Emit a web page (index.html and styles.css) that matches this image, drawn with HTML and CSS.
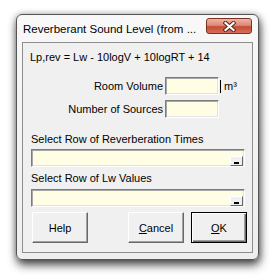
FILE: index.html
```html
<!DOCTYPE html>
<html>
<head>
<meta charset="utf-8">
<link rel="stylesheet" href="styles.css">
</head>
<body>
<div class="window">
  <div class="titlebar">
    <span class="title">Reverberant Sound Level (from ...</span>
    <div class="close">
      <svg width="13" height="11" viewBox="0 0 13 11">
        <path d="M2.5 2 L10.5 9 M10.5 2 L2.5 9" stroke="#5a2418" stroke-width="4.2" stroke-linecap="square"/>
        <path d="M2.5 2 L10.5 9 M10.5 2 L2.5 9" stroke="#ffffff" stroke-width="2.2" stroke-linecap="square"/>
      </svg>
    </div>
  </div>
  <div class="client">
    <div class="formula">Lp,rev = Lw - 10logV + 10logRT + 14</div>
    <div class="row row1">
      <span class="lbl">Room Volume</span>
      <div class="field small"></div>
      <span class="unit">m³</span>
    </div>
    <div class="row row2">
      <span class="lbl">Number of Sources</span>
      <div class="field small"></div>
    </div>
    <div class="caption cap1">Select Row of Reverberation Times</div>
    <div class="field wide"><div class="pick"><span class="dash"></span></div></div>
    <div class="caption cap2">Select Row of Lw Values</div>
    <div class="field wide wide2"><div class="pick"><span class="dash"></span></div></div>
    <div class="buttons">
      <div class="btn help">Help</div>
      <div class="btn cancel"><u>C</u>ancel</div>
      <div class="btn ok"><u>O</u>K</div>
    </div>
  </div>
</div>
</body>
</html>
```
FILE: styles.css
```css
html, body {
  margin: 0;
  padding: 0;
  background: #ffffff;
}
body {
  width: 280px;
  height: 277px;
  overflow: hidden;
  font-family: "Liberation Sans", Arial, sans-serif;
  font-size: 11px;
  color: #000;
}
.window {
  margin: 14px 0 0 16px;
  width: 243px;
  height: 246px;
  box-sizing: border-box;
  border: 1px solid #555555;
  border-radius: 6px;
  background: linear-gradient(#f8f8f8, #eeeeee);
  box-shadow: 1px 5px 10px rgba(0,0,0,0.7), 0 0 6px rgba(0,0,0,0.25);
  padding: 0 5px 6px 5px;
  display: flex;
  flex-direction: column;
}
.titlebar {
  height: 27px;
  display: flex;
  align-items: center;
  justify-content: space-between;
  padding-left: 1px;
}
.title {
  font-family: "Liberation Sans", Arial, sans-serif;
  font-size: 11.5px;
  color: #000;
  white-space: nowrap;
  margin-top: 1px;
}
.close {
  align-self: flex-start;
  margin-top: 3px;
  margin-right: 1px;
  width: 44px;
  height: 14px;
  border: 1px solid #7c3022;
  border-radius: 3px;
  background: linear-gradient(#ecb4a6 0%, #dc8a75 45%, #c64a34 55%, #d66f59 100%);
  display: flex;
  align-items: center;
  justify-content: center;
}
.client {
  flex: 1;
  border: 1px solid #8e8e8e;
  background: #f0f0f0;
  display: flex;
  flex-direction: column;
}
.formula {
  margin-top: 7px;
  padding-left: 7px;
  line-height: 14px;
  height: 14px;
}
.row {
  display: flex;
  align-items: center;
  height: 18px;
}
.row1 { margin-top: 13px; }
.row2 { margin-top: 5px; }
.lbl {
  width: 142px;
  text-align: right;
  padding-right: 2px;
  box-sizing: border-box;
  line-height: 14px;
}
.field {
  box-sizing: border-box;
  height: 18px;
  background: #fffde3;
  border: 1px solid;
  border-color: #7c7c7c #ffffff #ffffff #7c7c7c;
  box-shadow: inset 1px 1px 0 #a7a7a7, inset -1px -1px 0 #e3e3e3;
}
.field.small {
  width: 54px;
}
.unit {
  margin-left: 1px;
  padding-left: 3px;
  border-left: 1px solid #000;
  line-height: 12px;
  height: 13px;
}
.caption {
  padding-left: 8px;
  line-height: 14px;
  height: 14px;
}
.cap1 { margin-top: 14px; }
.cap2 { margin-top: 4px; }
.field.wide {
  margin: 3px 0 0 8px;
  width: 214px;
  display: flex;
  justify-content: flex-end;
  align-items: flex-end;
  padding: 0 1px 0 0;
}
.field.wide2 { margin-top: 4px; }
.pick {
  box-sizing: border-box;
  width: 13px;
  height: 10px;
  background: #f0f0f0;
  border: 1px solid;
  border-color: #ffffff #696969 #696969 #ffffff;
  display: flex;
  justify-content: center;
  align-items: flex-end;
  padding-bottom: 1px;
}
.dash {
  width: 5px;
  height: 2px;
  background: #000;
}
.buttons {
  display: flex;
  margin-top: 5px;
  padding-left: 9px;
}
.btn {
  box-sizing: border-box;
  width: 56px;
  height: 31px;
  background: #f0f0f0;
  border: 1px solid;
  border-color: #ffffff #696969 #696969 #ffffff;
  box-shadow: inset -1px -1px 0 #a0a0a0;
  display: flex;
  align-items: center;
  justify-content: center;
  line-height: 14px;
}
.cancel { margin-left: 40px; }
.ok {
  margin-left: 7px;
  border: 1px solid #000;
  box-shadow: inset 1px 1px 0 #ffffff, inset -1px -1px 0 #696969, inset -2px -2px 0 #a0a0a0;
}
u { text-decoration: underline; }
```
